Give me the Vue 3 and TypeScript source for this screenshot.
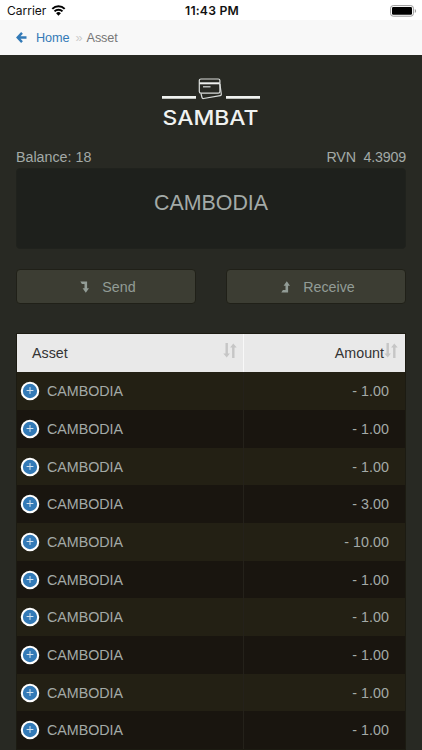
<script setup lang="ts">
interface Entry {
  asset: string
  amount: string
}

const entries: Entry[] = [
  '1.00', '1.00', '1.00', '3.00', '10.00', '1.00', '1.00', '1.00', '1.00', '1.00',
].map((value) => ({ asset: 'CAMBODIA', amount: `- ${value}` }))
</script>

<template>
  <div class="screen">
    <header class="status">
      <div class="carrier">
        <span>Carrier</span>
        <svg class="wifi" width="15" height="11" viewBox="0 0 14 11">
          <path d="M.8 3.900a8.800 8.800 0 0 1 12.400 0M3 6.400a5.600 5.600 0 0 1 8 0" fill="none" stroke="#000" stroke-width="2" />
          <path d="M4.600 8.300a3.400 3.400 0 0 1 4.800 0L7 10.800z" />
        </svg>
      </div>
      <span class="time">11:43 PM</span>
      <svg class="battery" width="27" height="12" viewBox="0 0 27 12">
        <rect x=".6" y=".6" width="22.800" height="10.600" rx="2.600" fill="none" stroke="#999" stroke-width="1" />
        <rect x="2" y="2" width="20" height="7.800" rx="1.200" />
        <path d="M24.800 4v4q1.300-.6 1.300-2t-1.300-2" fill="#999" />
      </svg>
    </header>

    <nav class="crumbs">
      <svg class="back" width="11" height="11" viewBox="0 0 11 11">
        <path d="M6 .9L1.700 5.500L6 10.100M2 5.500H10.500" fill="none" stroke="currentColor" stroke-width="2.400" />
      </svg>
      <a class="home">Home</a>
      <span class="sep">»</span>
      <span class="here">Asset</span>
    </nav>

    <main class="content">
      <svg class="logo" width="100" height="56" viewBox="0 0 100 56">
        <path d="M1 20.400h34M65 20.400h34" stroke="#f0f2f0" stroke-width="2.600" />
        <g fill="none" stroke="#d9dcda" stroke-width="1.200">
          <path d="M40 16.500l1 4q.3 1.200 1.500 1l16.700-2.800q1.300-.2 1.100-1.500L58.900 7" />
          <rect x="38.300" y="2" width="20.600" height="14.200" rx="1.600" />
        </g>
        <path d="M42 9.800h7.500" stroke="#d9dcda" stroke-width="1.200" />
        <path d="M38.500 6.300h20.200" stroke="#f0f2f0" stroke-width="2" />
        <text x="1.500" y="47.600" class="brand" textLength="96" lengthAdjust="spacingAndGlyphs">SAMBAT</text>
      </svg>

      <div class="summary">
        <span>Balance: 18</span>
        <span class="rvn">RVN&nbsp; 4.3909</span>
      </div>
      <section class="panel">CAMBODIA</section>

      <div class="actions">
        <button class="action">
          <svg width="9" height="12" viewBox="0 0 9 12">
            <path d="M.3 .4H7.100V7.300H9L5.800 11.700L2.600 7.300H4.500V3H1.900z" fill="currentColor" />
          </svg>
          <span>Send</span>
        </button>
        <button class="action">
          <svg width="9" height="12" viewBox="0 0 9 12">
            <path d="M.3 11.600H7.100V4.700H9L5.800 .3L2.600 4.700H4.500V9H1.900z" fill="currentColor" />
          </svg>
          <span>Receive</span>
        </button>
      </div>

      <section class="table">
        <div class="row head">
          <div class="cell name">
            <span>Asset</span>
            <svg class="sort" width="14" height="15" viewBox="0 0 14 15">
              <path d="M3.700 0v12M10.300 15V3" stroke="currentColor" stroke-width="2.400" />
              <path d="M.3 10.500h6.600L3.700 14.500zM7.100 4.500h6.600L10.300.5z" fill="currentColor" />
            </svg>
          </div>
          <div class="cell amount">
            <span>Amount</span>
            <svg class="sort" width="14" height="15" viewBox="0 0 14 15">
              <path d="M3.700 0v12M10.300 15V3" stroke="currentColor" stroke-width="2.400" />
              <path d="M.3 10.500h6.600L3.700 14.500zM7.100 4.500h6.600L10.300.5z" fill="currentColor" />
            </svg>
          </div>
        </div>
        <div v-for="(entry, i) in entries" :key="i" class="row entry">
          <div class="cell name">
            <svg class="expand" width="20" height="20" viewBox="0 0 20 20">
              <circle cx="10" cy="10" r="8.200" fill="#337ab7" stroke="#fff" stroke-width="2.100" />
              <path d="M6.600 9.500h6.800M10 6.100v6.800" stroke="#d5e4f1" stroke-width="1" />
            </svg>
            <span>{{ entry.asset }}</span>
          </div>
          <div class="cell amount">{{ entry.amount }}</div>
        </div>
      </section>
    </main>
  </div>
</template>

<style>
body {
  margin: 0;
  overflow: hidden;
  background: #272822;
}
</style>

<style scoped>
.screen {
  width: 422px;
  height: 750px;
  overflow: hidden;
  background: #282923;
  color: #a3aaa7;
  font-family: "Liberation Sans", Arial, sans-serif;
  font-size: 14.27px;
}
.status {
  display: grid;
  grid-template-columns: 1fr auto 1fr;
  align-items: center;
  height: 20px;
  padding: 1px 5px 0 7px;
  box-sizing: border-box;
  background: #fff;
  color: #111;
  font-family: Inter, sans-serif;
  font-size: 12px;
}
.carrier {
  display: flex;
  align-items: center;
  gap: 5px;
}
.time {
  font-weight: 600;
  font-size: 12.2px;
  letter-spacing: 0.2px;
}
.battery {
  justify-self: end;
}
.crumbs {
  display: flex;
  align-items: center;
  height: 35px;
  padding-left: 16px;
  background: #f8f8f8;
  font-size: 12.7px;
  color: #777;
}
.back,
.home {
  color: #337ab7;
}
.home {
  margin-left: 9px;
  letter-spacing: -0.1px;
}
.sep {
  margin: 0 4px 0 6px;
  color: #ccc;
}
.here {
  letter-spacing: -0.1px;
}
.content {
  display: flex;
  flex-direction: column;
  padding: 22px 16px 0;
}
.logo {
  align-self: center;
  overflow: visible;
}
.brand {
  font-family: Inter, "Liberation Sans", sans-serif;
  font-size: 19.800px;
  font-weight: 500;
  fill: #f0f2f0;
}
.summary {
  display: flex;
  justify-content: space-between;
  height: 20px;
  margin-top: 14px;
  padding-bottom: 1px;
  line-height: 20px;
}
.rvn {
  letter-spacing: -0.17px;
}
.panel {
  display: flex;
  align-items: center;
  justify-content: center;
  height: 81px;
  padding-bottom: 11px;
  box-sizing: border-box;
  border: 1px solid #20221d;
  border-radius: 4px;
  background: #1e201c;
  font-size: 21.400px;
}
.actions {
  display: grid;
  grid-template-columns: 1fr 1fr;
  gap: 30px;
  margin-top: 20px;
}
.action {
  display: flex;
  align-items: center;
  justify-content: center;
  gap: 13px;
  height: 35px;
  padding: 0 0 0 4px;
  border: 1px solid #202018;
  border-radius: 4px;
  background: #3c3d33;
  color: #929c96;
  font: inherit;
}
.table {
  margin-top: 29px;
  border: 1px solid #1c1b12;
}
.row {
  display: grid;
  grid-template-columns: 227px 1fr;
  height: 37.700px;
}
.row.head {
  height: 38.300px;
  background: #e9e9e9;
  color: #333;
}
.cell {
  display: flex;
  align-items: center;
}
.head .name {
  justify-content: space-between;
  padding: 0 6px 0 15px;
  border-right: 1px solid #f8f8f8;
}
.head .amount {
  padding-right: 7px;
}
.sort {
  margin-bottom: 5px;
  color: #c6c6c6;
}
.amount {
  justify-content: flex-end;
  padding-right: 16px;
}
.entry {
  background: #19150f;
}
.entry .amount {
  letter-spacing: 0.05px;
}
.entry:nth-child(even) {
  background: #232014;
}
.entry .name {
  gap: 7px;
  padding-left: 3px;
  border-right: 1px solid #24211a;
}
</style>
